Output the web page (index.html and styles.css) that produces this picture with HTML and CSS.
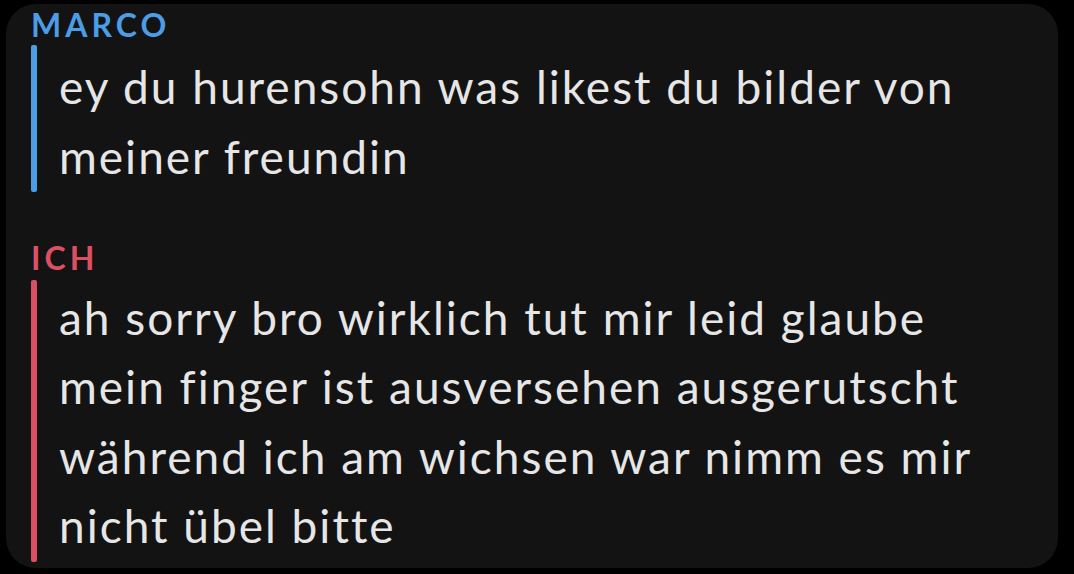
FILE: index.html
```html
<!DOCTYPE html>
<html lang="de">
<head>
    <meta charset="UTF-8">
    <title>Chat</title>
    <link rel="stylesheet" href="styles.css">
</head>
<body>
    <div class="chat">
        <div class="msg marco">
            <div class="name">MARCO</div>
            <div class="body">
                <div class="bar"></div>
                <div class="text">ey du hurensohn was likest du bilder von<br>meiner freundin</div>
            </div>
        </div>
        <div class="msg me">
            <div class="name">ICH</div>
            <div class="body">
                <div class="bar"></div>
                <div class="text">ah sorry bro wirklich tut mir leid glaube<br>mein finger ist ausversehen ausgerutscht<br>während ich am wichsen war nimm es mir<br>nicht übel bitte</div>
            </div>
        </div>
    </div>
</body>
</html>
```

FILE: styles.css
```css
body {
    margin: 0;
    background: #000;
    font-family: Lato, "Noto Sans", sans-serif;
    height: 574px;
    overflow: hidden;
}
.chat {
    margin: 4px 16px 0 6px;
    height: 564px;
    box-sizing: border-box;
    background: #131313;
    border-radius: 30px;
    padding: 5px 25px 0;
}
.name {
    font-size: 32px;
    line-height: 32px;
    font-weight: bold;
    letter-spacing: 4px;
}
.marco .name { color: #4b9de6; }
.me .name { color: #dc5064; }
.body {
    display: flex;
    gap: 22px;
}
.bar {
    width: 6px;
    border-radius: 2px;
}
.marco .bar { background: #4b9de6; margin: 4px 0 0; }
.me .bar { background: #d94f63; margin: 6px 0 -2px; }
.text {
    color: #e6e6e6;
    font-size: 46px;
    letter-spacing: 2px;
    white-space: nowrap;
}
.marco .text {
    margin-top: 11px;
    line-height: 70px;
}
.marco + .me {
    margin-top: 50px;
}
.me .text {
    margin-top: 9px;
    line-height: 69.3px;
}
```
